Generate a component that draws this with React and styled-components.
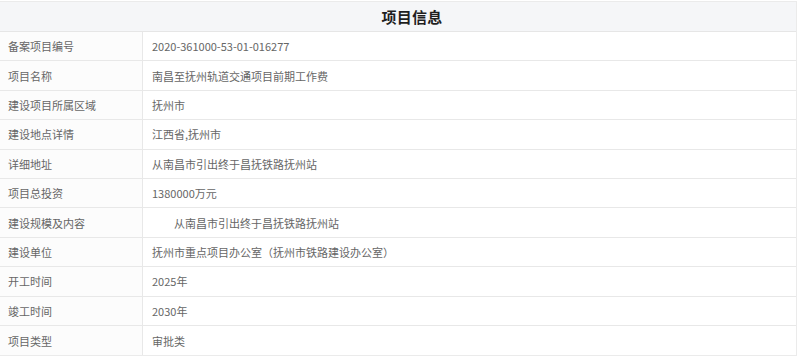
import styled, { createGlobalStyle } from "styled-components";

const GlobalStyle = createGlobalStyle`
  html, body {
    margin: 0;
    padding: 0;
    background: #ffffff;
  }
  body {
    font-family: "Noto Sans CJK SC", "Noto Sans", sans-serif;
  }
`;

const Table = styled.div`
  width: 797px;
  margin-top: 1px;
  border: 1px solid #ebebeb;
  border-left: none;
  box-sizing: border-box;
`;

const Header = styled.div`
  height: 30px;
  display: flex;
  align-items: center;
  justify-content: center;
  padding-left: 28px;
  background: #f5f6f8;
  border-bottom: 1px solid #e6e6e6;
  box-sizing: border-box;
  font-size: 15px;
  font-weight: 700;
  color: #1f1f1f;
  letter-spacing: 0.3px;
`;

const Row = styled.div`
  display: grid;
  grid-template-columns: 143px 1fr;
  height: 29.4px;
  box-sizing: border-box;
  border-bottom: ${({ $last }) => ($last ? "none" : "1px solid #e8e8e8")};
  font-size: 11px;
  color: #666666;
`;

const Label = styled.div`
  display: flex;
  align-items: center;
  padding-left: 8px;
  border-right: 1px solid #e8e8e8;
  background: #fcfcfc;
`;

const Value = styled.div`
  display: flex;
  align-items: center;
  padding-left: ${({ $indent }) => ($indent ? "31px" : "9px")};
  background: #ffffff;
`;

const rows = [
  ["备案项目编号", "2020-361000-53-01-016277"],
  ["项目名称", "南昌至抚州轨道交通项目前期工作费"],
  ["建设项目所属区域", "抚州市"],
  ["建设地点详情", "江西省,抚州市"],
  ["详细地址", "从南昌市引出终于昌抚铁路抚州站"],
  ["项目总投资", "1380000万元"],
  ["建设规模及内容", "从南昌市引出终于昌抚铁路抚州站", true],
  ["建设单位", "抚州市重点项目办公室（抚州市铁路建设办公室）"],
  ["开工时间", "2025年"],
  ["竣工时间", "2030年"],
  ["项目类型", "审批类"],
];

export default function App() {
  return (
    <>
      <GlobalStyle />
      <Table>
        <Header>项目信息</Header>
        {rows.map(([label, value, indent], i) => (
          <Row key={label} $last={i === rows.length - 1}>
            <Label>{label}</Label>
            <Value $indent={indent}>{value}</Value>
          </Row>
        ))}
      </Table>
    </>
  );
}
